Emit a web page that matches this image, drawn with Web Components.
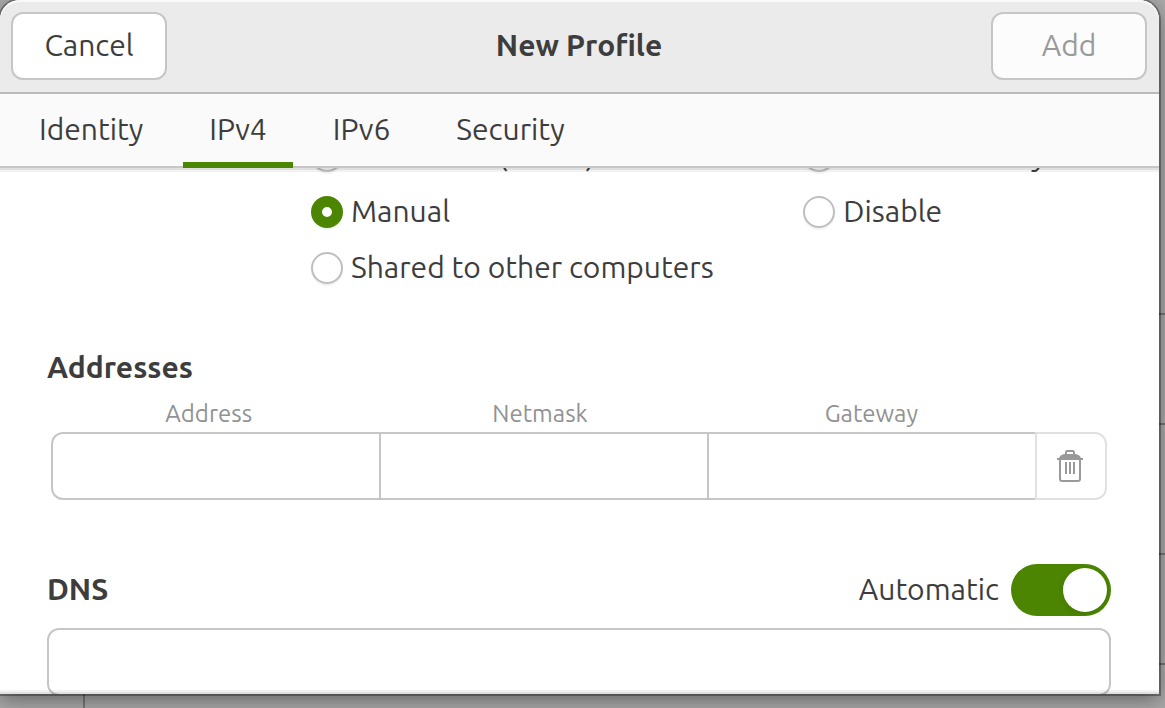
<!DOCTYPE html>
<html lang="en">
<head>
<meta charset="utf-8">
<title>New Profile</title>
<style>
  html, body { height: 100%; margin: 0; }
  body { font: 30px/36px "Ubuntu", "Noto Sans", sans-serif; color: #3d3d3d; overflow: hidden; }
</style>
</head>
<body>
<profile-desktop>
  <profile-dialog>
    <profile-header slot="header">New Profile</profile-header>
    <profile-tabs slot="tabs"></profile-tabs>
    <profile-method></profile-method>
    <profile-addresses></profile-addresses>
    <profile-dns></profile-dns>
  </profile-dialog>
</profile-desktop>
<script>
const define = (name, html, ready) => {
  const template = document.createElement('template');
  template.innerHTML = '<style>:host,*{box-sizing:border-box}button,input{font:inherit;color:inherit;margin:0}</style>' + html;
  customElements.define(name, class extends HTMLElement {
    connectedCallback() {
      if (this.shadowRoot) return;
      this.attachShadow({ mode: 'open' }).append(template.content.cloneNode(true));
      if (ready) ready(this.shadowRoot);
    }
  });
};

define('profile-header', `
<style>
  :host { display: grid; grid-template-columns: 1fr auto 1fr; align-items: center; padding: 12px 12px 12px 11px;
    background: #ebebeb; border-bottom: 2px solid #bababa; box-shadow: inset 0 2px #f9f9f9; }
  h1 { margin: 0; font-size: 30px; line-height: 36px; font-weight: 700; padding-bottom: 2px; }
  button { width: 156px; height: 68px; padding: 0 0 2px; background: #fff; border: 2px solid #c6c6c6; border-radius: 12px; }
  button:disabled { background: #fcfcfc; color: #9a9a9a; justify-self: end; }
</style>
<button type="button">Cancel</button>
<h1><slot></slot></h1>
<button type="button" disabled>Add</button>`);

define('profile-tabs', `
<style>
  :host { display: block; background: #fafafa; box-shadow: inset 0 -2px #c6c6c6; }
  nav { display: flex; gap: 14px; padding-left: 13px; }
  a { height: 74px; padding: 17px 26px 0; color: inherit; text-decoration: none; border-bottom: 6px solid transparent; }
  a[aria-current] { border-color: #4b8501; }
</style>
<nav aria-label="Profile pages">
  <a href="#identity">Identity</a><a href="#ipv4" aria-current="page">IPv4</a><a href="#ipv6">IPv6</a><a href="#security">Security</a>
</nav>`);

define('profile-method', `
<style>
  :host { display: block; }
  fieldset { display: grid; grid-template-columns: 8fr 5fr; grid-auto-rows: 36px; row-gap: 20px;
    margin: 0 0 0 264px; padding: 0; border: 0; }
  label { display: flex; align-items: center; gap: 8px; white-space: nowrap; }
  span { padding-bottom: 2px; }
  .first { grid-column: 1; }
  input { appearance: none; flex: none; width: 32px; height: 32px; border: 2px solid #bfbfbf; border-radius: 50%;
    background: #fff; box-shadow: 0 2px 1px #0000000d; }
  input:checked { border: 11px solid #4b8501; }
</style>
<fieldset aria-label="IPv4 Method">
  <label><input type="radio" name="method"><span>Automatic (DHCP)</span></label>
  <label><input type="radio" name="method"><span>Link-Local Only</span></label>
  <label class="first"><input type="radio" name="method" checked><span>Manual</span></label>
  <label><input type="radio" name="method"><span>Disable</span></label>
  <label class="first"><input type="radio" name="method"><span>Shared to other computers</span></label>
</fieldset>`);

define('profile-addresses', `
<style>
  :host { display: block; margin-top: 63px; }
  h2 { margin: 0; font-size: 30px; line-height: 36px; font-weight: 700; }
  .labels { display: grid; grid-template-columns: repeat(3, 1fr); margin: 13px 74px 0 -4px; text-align: center;
    font-size: 24px; line-height: 32px; color: #929292; }
  .row { display: grid; grid-template-columns: repeat(3, 1fr) 72px; margin: 2px 4px 0; }
  input, button { min-width: 0; height: 68px; background: #fff; border: 2px solid #c6c6c6; }
  input { width: 100%; padding: 0 16px; border-right: 0; outline: 0; }
  input:first-child { border-radius: 12px 0 0 12px; }
  button { display: grid; place-items: center; padding: 0; border-color: #e1e1e1; border-radius: 0 12px 12px 0; color: #999; }
</style>
<h2>Addresses</h2>
<div class="labels"><label for="address">Address</label><label for="netmask">Netmask</label><label for="gateway">Gateway</label></div>
<div class="row">
  <input id="address" type="text"><input id="netmask" type="text"><input id="gateway" type="text">
  <button type="button" aria-label="Delete address" disabled>
    <svg width="32" height="32" viewBox="1 0 32 32" aria-hidden="true">
      <path d="M12 4V2.500Q12 1 13 1H19Q20 1 20 2.500V4M6 10V29Q6 31 8 31H24Q26 31 26 29V10" fill="none" stroke="currentColor" stroke-width="2"/>
      <path d="M3 10V8H5Q6 5 10 4H22Q26 5 27 8H29V10ZM11 12H13V24H11ZM15 12H17V24H15ZM19 12H21V24H19Z" fill="currentColor"/>
    </svg>
  </button>
</div>`);

define('profile-dns', `
<style>
  :host { display: block; margin-top: 64px; }
  header { display: flex; align-items: center; justify-content: space-between; height: 52px; }
  h2 { margin: 0; padding-bottom: 2px; font-size: 30px; line-height: 36px; font-weight: 700; }
  .auto { display: flex; align-items: center; gap: 12px; }
  span { padding-bottom: 2px; }
  .switch { appearance: none; display: flex; justify-content: flex-end; width: 100px; height: 52px; padding: 4px;
    border-radius: 26px; background: #4b8501; }
  .switch::before { content: ""; width: 44px; height: 44px; border-radius: 50%; background: #fff; box-shadow: 0 2px 6px #0000001a; }
  .switch:not(:checked) { justify-content: flex-start; background: #c6c6c6; }
  .servers { display: block; width: 100%; height: 68px; margin-top: 12px; padding: 0 16px; background: #fff;
    border: 2px solid #c6c6c6; border-radius: 12px; outline: 0; }
</style>
<header>
  <h2>DNS</h2>
  <label class="auto"><span>Automatic</span><input class="switch" type="checkbox" role="switch" checked></label>
</header>
<input class="servers" type="text" aria-label="DNS">`);

define('profile-dialog', `
<style>
  :host { display: flex; flex-direction: column; flex: 1; min-width: 0; border-radius: 20px 20px 0 0;
    background: #fff; box-shadow: 0 0 0 2px #0000004d, 0 6px 20px #0006; }
  ::slotted([slot=header]) { border-radius: 20px 20px 0 0; }
  main { display: flex; flex: 1; min-height: 0; position: relative; }
  main::before, main::after { content: ""; position: absolute; left: 0; right: 0; height: 4px; pointer-events: none; }
  main::before { top: 0; background: linear-gradient(#0000001f 50%, #0000000d 50%); }
  main::after { bottom: 0; background: linear-gradient(#0000000d 50%, #0000001f 50%); }
  .scroll { flex: 1; overflow: auto; scrollbar-width: none; padding: 48px 48px 96px 47px; }
</style>
<slot name="header"></slot>
<slot name="tabs"></slot>
<main><div class="scroll"><slot></slot></div></main>`,
root => requestAnimationFrame(() => { root.querySelector('.scroll').scrollTop = 78; }));

define('profile-desktop', `
<style>
  :host { display: flex; height: 100vh; padding: 0 6px 14px 0; position: relative;
    background:
      linear-gradient(#777, #777) 83px 100% / 2px 14px no-repeat,
      linear-gradient(#747474, #747474) 100% 313px / 6px 2px no-repeat,
      linear-gradient(#747474, #747474) 100% 423px / 6px 2px no-repeat,
      linear-gradient(#747474, #747474) 100% 553px / 6px 2px no-repeat,
      linear-gradient(#747474, #747474) 100% 663px / 6px 2px no-repeat,
      #a8a8a8; }
</style>
<slot></slot>`);
</script>
</body>
</html>
